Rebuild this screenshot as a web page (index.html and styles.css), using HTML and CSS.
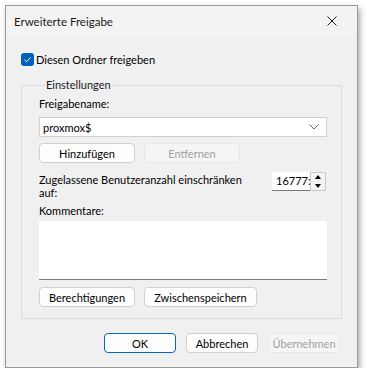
FILE: index.html
```html
<!DOCTYPE html>
<html lang="de">
<head>
    <meta charset="UTF-8">
    <title>Erweiterte Freigabe</title>
    <link rel="stylesheet" href="styles.css">
</head>
<body>
    <div class="window">
        <div class="titlebar">
            <span class="title">Erweiterte Freigabe</span>
            <span class="close">
                <svg width="10" height="10" viewBox="0 0 10 10"><path d="M0.5 0.5 L9.5 9.5 M9.5 0.5 L0.5 9.5" stroke="#1a1a1a" stroke-width="1" fill="none"/></svg>
            </span>
        </div>

        <div class="content">
            <label class="check-row">
                <span class="checkbox">
                    <svg width="9" height="9" viewBox="0 0 9 9"><path d="M1.5 4.8 L3.6 6.8 L7.6 2.4" stroke="#fff" stroke-width="1" fill="none"/></svg>
                </span>
                Diesen Ordner freigeben
            </label>

            <fieldset class="group">
                <legend>Einstellungen</legend>

                <div class="label">Freigabename:</div>
                <div class="combo">
                    <span>proxmox$</span>
                    <svg width="10" height="6" viewBox="0 0 10 6"><path d="M0.5 0.5 L5 5 L9.5 0.5" stroke="#606060" stroke-width="1" fill="none"/></svg>
                </div>

                <div class="btn-row">
                    <button class="btn">Hinzufügen</button>
                    <button class="btn" disabled>Entfernen</button>
                </div>

                <div class="limit-row">
                    <div class="limit-label">Zugelassene Benutzeranzahl einschränken<br>auf:</div>
                    <div class="spin">
                        <span class="spin-value">16777:</span>
                        <span class="spin-arrows">
                            <span class="arrow up"></span>
                            <span class="arrow down"></span>
                        </span>
                    </div>
                </div>

                <div class="label comment-label">Kommentare:</div>
                <div class="comment"></div>

                <div class="btn-row lower">
                    <button class="btn">Berechtigungen</button>
                    <button class="btn wide">Zwischenspeichern</button>
                </div>
            </fieldset>

            <div class="footer">
                <button class="btn default">OK</button>
                <button class="btn">Abbrechen</button>
                <button class="btn" disabled>Übernehmen</button>
            </div>
        </div>
    </div>
</body>
</html>
```

FILE: styles.css
```css
body {
    margin: 0;
    background: #ffffff;
    font-family: Lato, "Noto Sans", sans-serif;
    font-size: 11px;
    color: #000;
}
.window {
    margin: 5px 0 0 5px;
    width: 353px;
    height: 363px;
    box-sizing: border-box;
    border: 1px solid #9a9a9a;
    background: #f0f0f0;
    box-shadow: 2px 3px 6px rgba(0,0,0,0.35);
}
.titlebar {
    height: 30px;
    display: flex;
    align-items: center;
    justify-content: space-between;
    padding-left: 8px;
    background: #f3f3f3;
}
.title {
    font-size: 11.5px;
    color: #1a1a1a;
}
.close {
    width: 46px;
    display: flex;
    justify-content: center;
    padding-right: 2px;
}
.content {
    padding: 0 17px 0 15px;
}
.check-row {
    display: flex;
    align-items: center;
    gap: 2px;
    margin-top: 16px;
    height: 14px;
}
.checkbox {
    width: 13px;
    height: 13px;
    border-radius: 3px;
    background: #005fb8;
    display: flex;
    align-items: center;
    justify-content: center;
}
.group {
    margin: 12px 0 0 0;
    width: 305px;
    height: 241px;
    box-sizing: border-box;
    border: 1px solid #dcdcdc;
    padding: 4px 14px 0 17px;
}
.group legend {
    padding: 0 2px 0 1px;
    margin-left: 6px;
    line-height: 14px;
    color: #1a1a1a;
}
.label {
    height: 16px;
    line-height: 16px;
}
.combo {
    margin-top: 5px;
    width: 288px;
    height: 20px;
    box-sizing: border-box;
    border: 1px solid #d0d0d0;
    background: #fff;
    display: flex;
    align-items: center;
    justify-content: space-between;
    padding: 0 7px 0 3px;
}
.btn-row {
    display: flex;
    gap: 9px;
    margin-top: 6px;
}
.btn {
    font-family: inherit;
    font-size: 11px;
    height: 20px;
    width: 96px;
    padding: 0;
    background: #fdfdfd;
    border: 1px solid #d0d0d0;
    border-radius: 4px;
    color: #000;
}
.btn.wide {
    width: 113px;
}
.btn:disabled {
    background: #f5f5f5;
    border-color: #e8e8e8;
    color: #a0a0a0;
}
.limit-row {
    display: flex;
    justify-content: space-between;
    align-items: flex-start;
    margin-top: 10px;
    width: 288px;
}
.limit-label {
    line-height: 13px;
    white-space: nowrap;
}
.spin {
    display: flex;
    height: 19px;
    margin-top: -1px;
    margin-right: 1px;
}
.spin-value {
    width: 38px;
    box-sizing: border-box;
    background: #fff;
    border-bottom: 1px solid #7a7a7a;
    line-height: 18px;
    padding-left: 4px;
    white-space: nowrap;
    overflow: hidden;
}
.spin-arrows {
    width: 16px;
    box-sizing: border-box;
    border: 1px solid #c8c8c8;
    background: #f4f4f4;
    display: flex;
    flex-direction: column;
    align-items: center;
    justify-content: space-around;
}
.arrow {
    width: 0;
    height: 0;
    border-left: 3px solid transparent;
    border-right: 3px solid transparent;
}
.arrow.up {
    border-bottom: 4px solid #000;
}
.arrow.down {
    border-top: 4px solid #000;
}
.comment-label {
    margin-top: 4px;
}
.comment {
    margin-top: 2px;
    width: 288px;
    height: 59px;
    box-sizing: border-box;
    background: #fff;
    border-bottom: 1px solid #7a7a7a;
}
.btn-row.lower {
    margin-top: 7px;
}
.footer {
    display: flex;
    justify-content: flex-end;
    gap: 10px;
    margin-top: 14px;
}
.footer .btn {
    width: 72px;
}
.btn.default {
    border: 1px solid #0067c0;
}
```
